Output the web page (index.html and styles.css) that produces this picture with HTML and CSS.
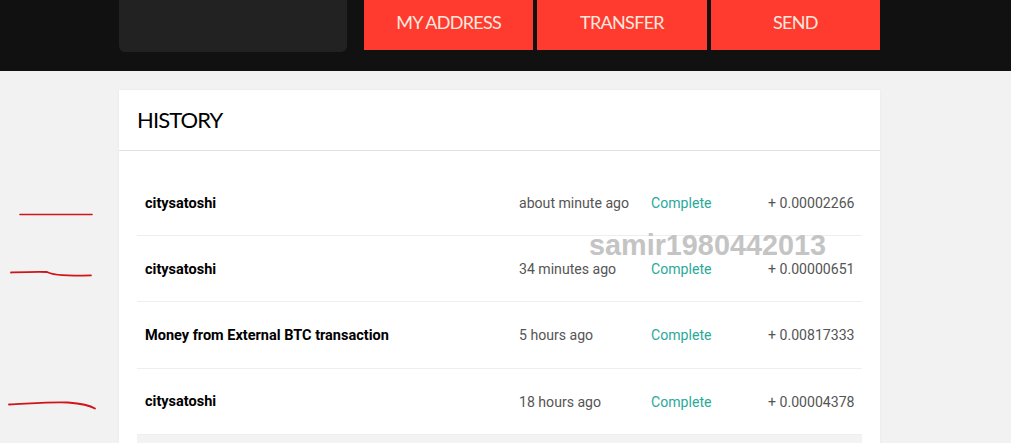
FILE: index.html
```html
<!DOCTYPE html>
<html lang="en">
<head>
  <meta charset="UTF-8" />
  <meta name="viewport" content="width=device-width, initial-scale=1.0"/>
  <title>History</title>
  <link rel="stylesheet" href="styles.css">
</head>
<body>
  <header class="topbar">
    <div class="wrap topbar-inner">
      <div class="balance-box"></div>
      <nav class="actions">
        <a class="action" href="#">MY ADDRESS</a>
        <a class="action" href="#">TRANSFER</a>
        <a class="action" href="#">SEND</a>
      </nav>
    </div>
  </header>

  <main class="wrap">
    <section class="card">
      <h2 class="card-title">HISTORY</h2>
      <div class="rows">
        <div class="row">
          <span class="name">citysatoshi</span>
          <span class="time">about minute ago</span>
          <span class="status">Complete</span>
          <span class="amount">+ 0.00002266</span>
        </div>
        <div class="row">
          <span class="name">citysatoshi</span>
          <span class="time">34 minutes ago</span>
          <span class="status">Complete</span>
          <span class="amount">+ 0.00000651</span>
        </div>
        <div class="row">
          <span class="name">Money from External BTC transaction</span>
          <span class="time">5 hours ago</span>
          <span class="status">Complete</span>
          <span class="amount">+ 0.00817333</span>
        </div>
        <div class="row">
          <span class="name">citysatoshi</span>
          <span class="time">18 hours ago</span>
          <span class="status">Complete</span>
          <span class="amount">+ 0.00004378</span>
        </div>
        <div class="row row-shaded"></div>
      </div>
    </section>
  </main>

  <!-- red pen marks and watermark sit over the page -->
  <svg class="marks" width="1011" height="443" viewBox="0 0 1011 443" fill="none" stroke="#d0141c" stroke-linecap="round">
    <path d="M20 214.5 L92 214.5" stroke-width="1.6"/>
    <path d="M11 272.5 C25 272 38 271.5 47 272 C55 275.5 65 276 91 275.3" stroke-width="1.8"/>
    <path d="M9 404.5 C30 403.5 55 401.5 68 402.5 C80 403.5 90 405.5 95 408.5" stroke-width="1.8"/>
  </svg>
  <div class="watermark">samir1980442013</div>
</body>
</html>
```

FILE: styles.css
```css
html, body {
  margin: 0;
  height: 443px;
  overflow: hidden;
}
body {
  position: relative;
  background-color: #f2f2f2;
  font-family: Roboto, sans-serif;
  font-size: 14.1px;
}
.wrap {
  width: 761px;
  margin-left: 119px;
}
.topbar {
  height: 71px;
  background-color: #111;
}
.topbar-inner {
  display: flex;
  gap: 17px;
}
.balance-box {
  width: 228px;
  height: 52px;
  background-color: #222;
  border-radius: 0 0 6px 6px;
}
.actions {
  flex: 1;
  display: flex;
  gap: 4px;
}
.action {
  flex: 1;
  height: 50px;
  line-height: 45px;
  background-color: #ff3b30;
  color: #fbe9df;
  font-family: Lato, sans-serif;
  font-size: 18px;
  letter-spacing: -0.7px;
  text-align: center;
  text-decoration: none;
}
.card {
  margin-top: 19px;
  background-color: #fff;
  box-shadow: 0 0 2px rgba(0,0,0,0.06);
}
.card-title {
  margin: 0;
  height: 60px;
  padding-left: 18px;
  line-height: 59px;
  font-family: Lato, sans-serif;
  font-size: 22px;
  font-weight: 400;
  letter-spacing: -0.9px;
  color: #000;
  border-bottom: 1px solid #e2e2e2;
}
.rows {
  padding: 19px 18px 0;
}
.row {
  display: grid;
  grid-template-columns: 374px 132px 117px 1fr;
  align-items: center;
  box-sizing: border-box;
  height: 66.2px;
  padding: 1px 8px 0;
  border-bottom: 1px solid #eee;
  color: #555;
}
.row-shaded {
  background-color: #f3f3f3;
  border-bottom: none;
}
.name {
  font-size: 14.5px;
  font-weight: 700;
  color: #000;
}
.status {
  color: #2aa99b;
}
.amount {
  white-space: nowrap;
}
.marks {
  position: absolute;
  top: 0;
  left: 0;
}
.watermark {
  position: absolute;
  top: 229px;
  left: 589px;
  font-family: "Liberation Sans", sans-serif;
  font-size: 28.8px;
  font-weight: 700;
  color: #c4c4c4;
}
```
